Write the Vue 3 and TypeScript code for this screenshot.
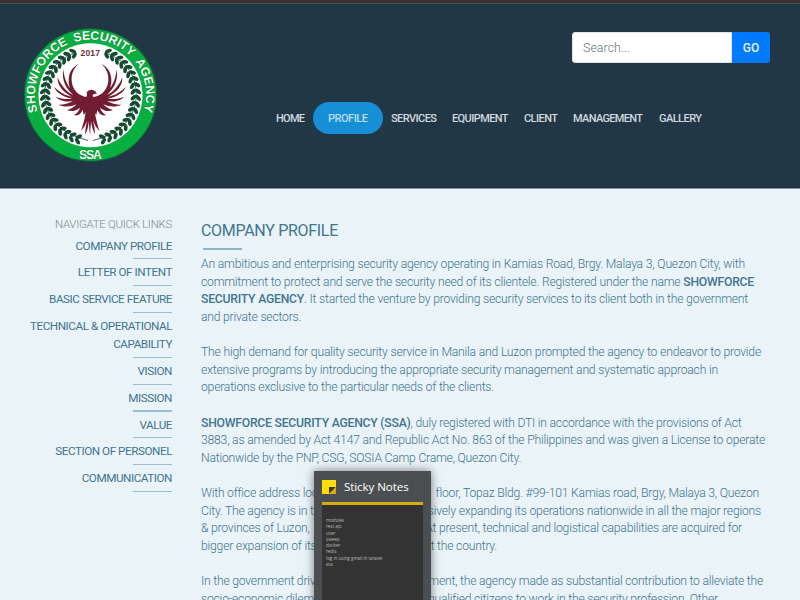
<script setup lang="ts">
interface Line { text: string; width: number; tail?: string; strong?: string; strongFirst?: boolean }

const nav = [
  { label: 'HOME', width: 29 },
  { label: 'PROFILE', width: 40, active: true },
  { label: 'SERVICES', width: 46 },
  { label: 'EQUIPMENT', width: 56.5 },
  { label: 'CLIENT', width: 34 },
  { label: 'MANAGEMENT', width: 70 },
  { label: 'GALLERY', width: 43 },
]

const links = [
  'COMPANY PROFILE', 'LETTER OF INTENT', 'BASIC SERVICE FEATURE', 'TECHNICAL & OPERATIONAL CAPABILITY',
  'VISION', 'MISSION', 'VALUE', 'SECTION OF PERSONEL', 'COMMUNICATION',
]

const paragraphs: Line[][] = [
  [
    { text: 'An ambitious and enterprising security agency operating in Kamias Road, Brgy. Malaya 3, Quezon City, with', width: 544 },
    { text: 'commitment to protect and serve the security need of its clientele. Registered under the name ', strong: 'SHOWFORCE', width: 553 },
    { text: '. It started the venture by providing security services to its client both in the government', strong: 'SECURITY AGENCY', strongFirst: true, width: 547 },
    { text: 'and private sectors.', width: 100 },
  ],
  [
    { text: 'The high demand for quality security service in Manila and Luzon prompted the agency to endeavor to provide', width: 560 },
    { text: 'extensive programs by introducing the appropriate security management and systematic approach in', width: 517 },
    { text: 'operations exclusive to the particular needs of the clients.', width: 293 },
  ],
  [
    { text: ', duly registered with DTI in accordance with the provisions of Act', strong: 'SHOWFORCE SECURITY AGENCY (SSA)', strongFirst: true, width: 539 },
    { text: '3883, as amended by Act 4147 and Republic Act No. 863 of the Philippines and was given a License to operate', width: 564 },
    { text: 'Nationwide by the PNP, CSG, SOSIA Camp Crame, Quezon City.', width: 320 },
  ],
  [
    { text: 'With office address located', tail: 'floor, Topaz Bldg. #99-101 Kamias road, Brgy, Malaya 3, Quezon', width: 558 },
    { text: 'City. The agency is in the', tail: 'aggressively expanding its operations nationwide in all the major regions', width: 560 },
    { text: '& provinces of Luzon,', tail: 'At present, technical and logistical capabilities are acquired for', width: 541 },
    { text: 'bigger expansion of its', tail: 'throughout the country.', width: 296 },
  ],
  [
    { text: 'In the government drive', tail: 'employment, the agency made as substantial contribution to alleviate the', width: 562 },
    { text: 'socio-economic dilemma', tail: 'qualified citizens to work in the security profession. Other', width: 517 },
  ],
]

const notes = ['modules', 'rest api', 'user', 'sweep', 'docker', 'redis', 'log in using gmail in laravel', 'ass']

const leaves = Array.from({ length: 19 }, (_, i) => {
  const deg = 112 + i * 7.9
  const a = (deg * Math.PI) / 180
  return { x: 90.5 + Math.cos(a) * 45.3, y: 95.3 - Math.sin(a) * 45.3, r: -deg }
})
</script>

<template>
  <div class="page">
    <header class="header">
      <svg class="logo" viewBox="22 27 137 137" width="137" height="137">
        <defs>
          <path id="ring" d="M 37.8 112.5 A 55.5 55.5 0 1 1 143.2 112.5" />
          <g id="laurel">
            <path d="M73 53.5 Q44 66 44.7 97 Q47 130 88 140.5" fill="none" stroke="#164b32" stroke-width=".8" />
            <g v-for="(leaf, i) in leaves" :key="i" :transform="`translate(${leaf.x} ${leaf.y}) rotate(${leaf.r})`">
              <ellipse cx="2.5" cy="0" rx="3.5" ry="1.9" transform="rotate(-48 2.5 0)" />
              <ellipse cx="-2.3" cy="0" rx="3.5" ry="1.9" transform="rotate(48 -2.3 0)" />
            </g>
          </g>
          <g id="wing">
            <path d="M258 296 C224 296 204 270 206 238 C207 216 218 201 235 192 C220 207 214 223 215 241 C216 268 235 289 261 291 L266 330 C258 330 254 343 251 345 L248 330 C240 346 231 348 222 345 C231 340 237 332 240 323 C225 336 211 334 201 330 C214 327 224 320 230 313 C211 322 188 321 176 314 C193 314 207 310 219 303 C199 307 177 302 167 290 C183 297 202 299 216 296 C194 292 168 279 163 261 C177 276 199 288 216 290 C193 280 171 258 173 232 C182 256 200 276 220 286 C202 270 183 244 190 208 C193 244 209 277 244 290 Z" />
          </g>
        </defs>
        <circle cx="90.5" cy="95" r="66.2" fill="#08ae3f" stroke="#125c39" stroke-width="1.1" />
        <circle cx="90.5" cy="95.3" r="52" fill="#fff" />
        <g class="logo-text">
          <text><textPath href="#ring" textLength="207" startOffset="1">SHOWFORCE&#160; SECURITY&#160; AGENCY</textPath></text>
          <text x="79" y="159.3" textLength="23">SSA</text>
        </g>
        <text class="year" x="80.5" y="55.5" textLength="19.5">2017</text>
        <g fill="#164b32">
          <use href="#laurel" />
          <use href="#laurel" transform="translate(181 0) scale(-1 1)" />
        </g>
        <g transform="scale(.33333)" fill="#711c30">
          <use href="#wing" />
          <use href="#wing" transform="translate(540 0) scale(-1 1)" />
          <path d="M258 294 Q263 286 260 277 Q266 267 279 270 Q288 273 291 283 Q282 279 278 286 Q277 292 286 299 L284 330 Q284 345 298 393 Q284 379 279 361 Q285 382 285 402 Q277 391 273 364 L270 409 L266 364 Q265 388 255 404 Q256 381 261 362 Q255 381 243 393 Q257 352 257 328Z" />
        </g>
      </svg>
      <div class="header-main">
        <form class="search" @submit.prevent>
          <input class="search-input" type="text" placeholder="Search..." />
          <button class="search-button">GO</button>
        </form>
        <nav class="nav">
          <a v-for="item in nav" :key="item.label" class="nav-item" :class="{ active: item.active }">
            <svg :width="item.width" height="14"><text x="0" y="11" :textLength="item.width">{{ item.label }}</text></svg>
          </a>
        </nav>
      </div>
    </header>

    <main class="body">
      <aside class="sidebar">
        <h2 class="sidebar-title">NAVIGATE QUICK LINKS</h2>
        <a v-for="link in links" :key="link" class="sidebar-link">{{ link }}</a>
      </aside>
      <article class="content">
        <h1 class="title">COMPANY PROFILE</h1>
        <div v-for="(p, i) in paragraphs" :key="i" class="paragraph">
          <div v-for="line in p" :key="line.text" class="line" :class="{ split: line.tail }" :style="{ width: line.width + 'px' }">
            <template v-if="line.tail"><span>{{ line.text }}</span><span>{{ line.tail }}</span></template>
            <template v-else><strong v-if="line.strongFirst">{{ line.strong }}</strong>{{ line.text }}<strong v-if="line.strong && !line.strongFirst">{{ line.strong }}</strong></template>
          </div>
        </div>
      </article>
    </main>

    <div class="sticky">
      <div class="sticky-head">
        <svg width="14" height="14" viewBox="0 0 14 14">
          <path d="M0 0H14V14H0Z" fill="#ffdc08" />
          <path d="M7 7H14L7 14Z" fill="#363636" />
          <path d="M14 7V14H7Z" fill="#dca900" />
        </svg>
        <span>Sticky Notes</span>
      </div>
      <div class="sticky-body">
        <div v-for="note in notes" :key="note">{{ note }}</div>
      </div>
    </div>
  </div>
</template>

<style>
body { margin: 0; overflow: hidden; }
</style>

<style scoped>
.page { position: relative; width: 800px; height: 600px; overflow: hidden; background: #eaf3f7; font-family: Roboto, sans-serif; color: #417590; }
.header { box-sizing: border-box; height: 189px; display: flex; background: #223746; border-top: 3px solid #3a3433; border-bottom: 1px solid #8496a1; box-shadow: inset 0 1px #4c5257, inset 0 -1px #182c3c; }
.logo { margin: 24px 0 0 22px; flex: none; }
.header-main { flex: 1; display: flex; flex-direction: column; }
.search { display: flex; align-self: flex-end; margin: 29px 30px 0 0; height: 31px; }
.search-input { box-sizing: border-box; width: 160px; border: 1px solid #dfe3e6; border-radius: 3px 0 0 3px; padding: 0 10px; font: 300 12.5px Roboto, sans-serif; background: #fff; }
.search-input::placeholder { color: #6c757d; opacity: 1; }
.search-button { width: 38px; border: 0; padding: 0; border-radius: 0 3px 3px 0; background: #007bff; color: #e8f4ff; font: 500 12px Roboto, sans-serif; }
.nav { display: flex; align-items: center; margin: 38.5px 0 0 117px; }
.nav-item { display: flex; align-items: center; height: 32px; margin-right: 15.3px; fill: #d0d8df; font-size: 11px; font-weight: 500; }
.nav-item:first-child { margin-right: 8px; }
.nav-item.active { padding: 0 15px; border-radius: 16px; background: #178fd6; margin-right: 8px; fill: #b9ddf5; }
.logo-text { font: bold 12.3px "Liberation Sans", sans-serif; fill: #f2fff4; stroke: #0a7a34; stroke-width: .8px; paint-order: stroke; }
.year { font: bold 8.5px "Liberation Sans", sans-serif; fill: #67313d; }
.body { display: flex; }
.sidebar { width: 144px; padding: 26px 0 0 28px; display: flex; flex-direction: column; align-items: flex-end; text-align: right; }
.sidebar-title { margin: 0; font-size: 11.5px; line-height: 18.5px; font-weight: 300; letter-spacing: -.3px; color: #848b8b; white-space: nowrap; }
.sidebar-link { font-size: 11.7px; line-height: 18.5px; letter-spacing: -.45px; margin-top: 3.2px; }
.sidebar-link + .sidebar-link { margin-top: 4.05px; }
.sidebar-link::after { content: ""; display: block; width: 39px; height: 1.2px; margin: 3px 0 0 auto; background: #9bbccc; }
.content { padding: 31px 0 0 29px; }
.title { margin: 0 0 6px; font-size: 16px; line-height: 22px; font-weight: 400; letter-spacing: -.3px; }
.title::after { content: ""; display: block; width: 39px; height: 2px; margin: 6px 0 0 2px; background: #8cb4c8; }
.paragraph { margin-bottom: 17.65px; font-size: 12.2px; line-height: 17.62px; font-weight: 300; letter-spacing: -.225px; }
.line { white-space: nowrap; text-align: justify; text-align-last: justify; }
.line.split { display: flex; justify-content: space-between; }
.line strong { font-weight: 500; }
.sticky { position: absolute; left: 314px; top: 471px; width: 117px; height: 140px; box-sizing: border-box; padding: 0 8px; background: #4b4f51; box-shadow: 0 0 9px rgba(0, 0, 0, .5); }
.sticky-head { display: flex; align-items: center; gap: 8px; height: 31px; color: #fff; font: 11.6px "Open Sans", sans-serif; letter-spacing: -.1px; white-space: nowrap; }
.sticky-body { height: 110px; box-sizing: border-box; border-top: 3px solid #d8ac06; padding: 12px 0 0 4px; background: #333; color: #bbb; font: 4.5px/6.3px "Open Sans", sans-serif; }
</style>
